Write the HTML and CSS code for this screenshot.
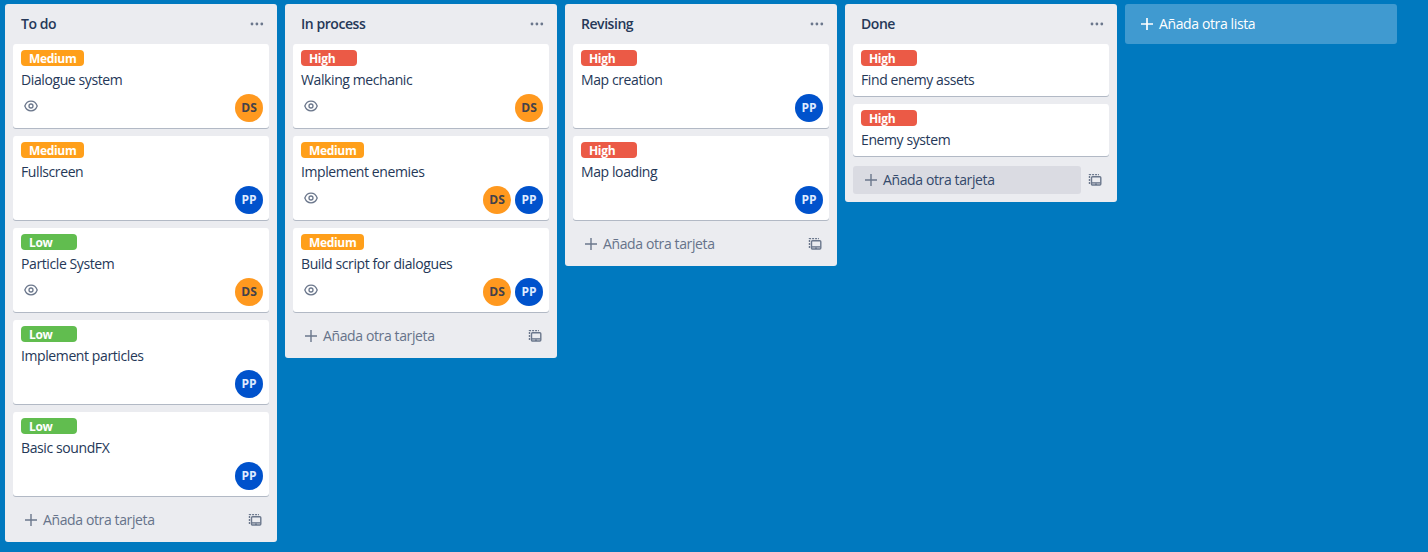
FILE: index.html
```html
<!DOCTYPE html>
<html lang="es">
<head>
<meta charset="utf-8">
<title>Tablero</title>
<link rel="stylesheet" href="styles.css">
</head>
<body>
<svg class="sprite" aria-hidden="true">
  <symbol id="dots" viewBox="0 0 14 4"><circle cx="2" cy="2" r="1.4"/><circle cx="6.9" cy="2" r="1.4"/><circle cx="11.8" cy="2" r="1.4"/></symbol>
  <symbol id="eye" viewBox="0 0 14 12"><path d="M.8 6C2 2.800 4.200 1.200 7 1.200S12 2.800 13.200 6C12 9.200 9.800 10.800 7 10.800S2 9.200 .8 6Z"/><circle cx="7" cy="6" r="2"/></symbol>
  <symbol id="plus" viewBox="0 0 14 14"><path d="M7 1v12M1 7h12"/></symbol>
  <symbol id="template" viewBox="0 0 14 14"><path class="dash" d="M1.500 11V1.600H11"/><rect x="3.500" y="3.800" width="9.300" height="8.200" rx="1"/><path d="M4 9.900h8.500"/><path d="M7 11.200h2"/></symbol>
</svg>
<main class="board">
  <section class="list">
    <header class="list-header"><h2>To do</h2><svg class="dots"><use href="#dots"/></svg></header>
    <div class="cards">
      <article class="card"><span class="label medium">Medium</span><p>Dialogue system</p><div class="meta"><svg class="eye"><use href="#eye"/></svg><b class="member ds">DS</b></div></article>
      <article class="card"><span class="label medium">Medium</span><p>Fullscreen</p><div class="meta"><b class="member pp">PP</b></div></article>
      <article class="card"><span class="label low">Low</span><p>Particle System</p><div class="meta"><svg class="eye"><use href="#eye"/></svg><b class="member ds">DS</b></div></article>
      <article class="card"><span class="label low">Low</span><p>Implement particles</p><div class="meta"><b class="member pp">PP</b></div></article>
      <article class="card"><span class="label low">Low</span><p>Basic soundFX</p><div class="meta"><b class="member pp">PP</b></div></article>
    </div>
    <footer class="list-footer"><a class="add"><svg class="plus"><use href="#plus"/></svg><span>Añada otra tarjeta</span></a><svg class="template"><use href="#template"/></svg></footer>
  </section>
  <section class="list">
    <header class="list-header"><h2>In process</h2><svg class="dots"><use href="#dots"/></svg></header>
    <div class="cards">
      <article class="card"><span class="label high">High</span><p>Walking mechanic</p><div class="meta"><svg class="eye"><use href="#eye"/></svg><b class="member ds">DS</b></div></article>
      <article class="card"><span class="label medium">Medium</span><p>Implement enemies</p><div class="meta"><svg class="eye"><use href="#eye"/></svg><b class="member ds">DS</b><b class="member pp">PP</b></div></article>
      <article class="card"><span class="label medium">Medium</span><p>Build script for dialogues</p><div class="meta"><svg class="eye"><use href="#eye"/></svg><b class="member ds">DS</b><b class="member pp">PP</b></div></article>
    </div>
    <footer class="list-footer"><a class="add"><svg class="plus"><use href="#plus"/></svg><span>Añada otra tarjeta</span></a><svg class="template"><use href="#template"/></svg></footer>
  </section>
  <section class="list">
    <header class="list-header"><h2>Revising</h2><svg class="dots"><use href="#dots"/></svg></header>
    <div class="cards">
      <article class="card"><span class="label high">High</span><p>Map creation</p><div class="meta"><b class="member pp">PP</b></div></article>
      <article class="card"><span class="label high">High</span><p>Map loading</p><div class="meta"><b class="member pp">PP</b></div></article>
    </div>
    <footer class="list-footer"><a class="add"><svg class="plus"><use href="#plus"/></svg><span>Añada otra tarjeta</span></a><svg class="template"><use href="#template"/></svg></footer>
  </section>
  <section class="list">
    <header class="list-header"><h2>Done</h2><svg class="dots"><use href="#dots"/></svg></header>
    <div class="cards">
      <article class="card"><span class="label high">High</span><p>Find enemy assets</p></article>
      <article class="card"><span class="label high">High</span><p>Enemy system</p></article>
    </div>
    <footer class="list-footer"><a class="add hovered"><svg class="plus"><use href="#plus"/></svg><span>Añada otra tarjeta</span></a><svg class="template"><use href="#template"/></svg></footer>
  </section>
  <a class="add-list"><svg class="plus"><use href="#plus"/></svg><span>Añada otra lista</span></a>
</main>
</body>
</html>
```

FILE: styles.css
```css
* { box-sizing: border-box; }
body {
  margin: 0;
  height: 552px;
  overflow: hidden;
  background: #0079bf;
  color: #253858;
  font: 14px/20px "Segoe UI", "Open Sans", "Noto Sans", sans-serif;
}
h2, p { margin: 0; }
svg { flex: none; fill: none; stroke: currentColor; }
.sprite { display: none; }
.board { display: flex; align-items: flex-start; gap: 8px; padding: 4px 5px; }
.list { flex: none; width: 272px; padding: 0 8px 8px; border-radius: 3px; background: #ebecf0; }
.list-header { display: flex; align-items: center; justify-content: space-between; height: 40px; padding: 0 5px 0 8px; }
.list-header h2 { font-size: 14px; font-weight: 600; line-height: 20px; letter-spacing: -0.45px; }
.dots { width: 14px; height: 4px; fill: #6b778c; stroke: none; }
.cards { display: flex; flex-direction: column; gap: 8px; }
.card { padding: 6px 6px 6px 8px; border-radius: 3px; background: #fff; box-shadow: 0 1px 0 rgba(9, 30, 66, .25); }
.card p { margin-top: 4px; letter-spacing: -0.4px; white-space: nowrap; }
.label {
  display: block;
  width: fit-content;
  min-width: 56px;
  height: 16px;
  padding: 0 8px;
  overflow: hidden;
  border-radius: 4px;
  color: #fff;
  font-size: 12px;
  font-weight: 700;
  line-height: 18px;
  letter-spacing: -0.33px;
}
.medium { background: #ff9f1a; }
.high { background: #eb5a46; }
.low { background: #61bd4f; }
.meta { display: flex; justify-content: flex-end; gap: 4px; height: 32px; padding-top: 4px; }
.eye { width: 14px; height: 12px; margin: 6px auto 0 3px; color: #6b778c; stroke-width: 1.3; }
.member { width: 28px; height: 28px; border-radius: 50%; font-size: 12px; line-height: 28px; text-align: center; }
.ds { background: #ff991f; color: #42414a; }
.pp { background: #0052cc; color: #deebff; }
.list-footer { display: flex; align-items: center; height: 38px; padding-top: 10px; color: #6b778c; }
.add { display: flex; align-items: center; gap: 5px; width: 228px; height: 28px; padding-left: 11px; border-radius: 3px; color: #66738a; letter-spacing: -0.38px; }
.add.hovered { background: #dadbe2; color: #33496b; }
.plus { width: 14px; height: 14px; color: #6b778c; stroke-width: 1.4; }
.template { width: 14px; height: 14px; margin-left: 7px; stroke-width: 1.4; }
.dash { stroke-dasharray: 2 1; }
.add-list { display: flex; align-items: center; gap: 5px; width: 272px; height: 40px; padding-left: 15px; border-radius: 3px; background: #409ad0; color: #fff; letter-spacing: -0.38px; }
.add-list .plus { color: #fff; stroke-width: 1.7; }
```
